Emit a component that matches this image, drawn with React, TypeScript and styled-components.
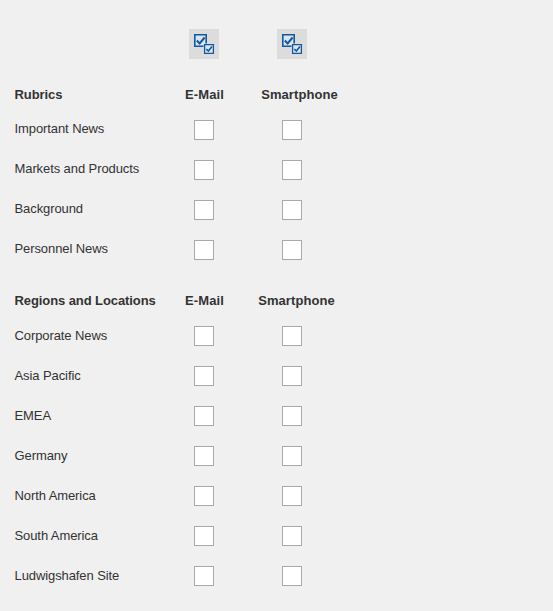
import React from "react";
import styled, { createGlobalStyle } from "styled-components";

const GlobalStyle = createGlobalStyle`
  * { box-sizing: border-box; }
  body { margin: 0; background: #f0f0f0; }
`;

const Page = styled.main`
  min-height: 611px;
  padding: 29px 0 0 14px;
  background: #f0f0f0;
  color: #333;
  font: 13px/20px "Liberation Sans", Arial, sans-serif;
`;

const Row = styled.div`
  display: grid;
  grid-template-columns: 146px 88px 88px;
  height: 40px;
`;

const ActionRow = styled(Row)`
  height: 56px;
`;

const HeadingRow = styled(Row)`
  height: 34px;
  font-weight: bold;
`;

const Section = styled.section`
  margin-bottom: 12px;
`;

const Label = styled.span<{ $drop?: number }>`
  padding: ${({ $drop = 0 }) => $drop}px 0 0 0.5px;
  letter-spacing: -0.09px;
  white-space: nowrap;
`;

const Cell = styled.div<{ $shift?: number }>`
  display: flex;
  justify-content: center;
  align-items: flex-start;
  margin-left: ${({ $shift = 0 }) => $shift}px;
`;

const ColumnHeading = styled(Cell)`
  letter-spacing: 0.08px;
`;

const SelectAll = styled.button`
  width: 30px;
  height: 30px;
  padding: 0;
  border: 0;
  background: #dcdcdc;
`;

const Checkbox = styled.input`
  appearance: none;
  width: 20px;
  height: 20px;
  margin: 1px 0 0;
  border: 1px solid #aaa;
  background: #fff;
`;

const SelectAllIcon = () => (
  <svg width="30" height="30" viewBox="0 0 30 30" fill="none" stroke="#1359a0" display="block">
    <path d="M5.8 5.8h11.4v11.4H5.8z" fill="#dce5ed" strokeWidth="1.6" />
    <path d="m7.8 11.5 2.8 3 5-6" strokeWidth="2" />
    <path d="M14.5 14.5h11v11h-11z" fill="#dcdcdc" stroke="none" />
    <path d="M15.6 15.6h8.8v8.8h-8.8z" fill="#dce5ed" strokeWidth="1.3" />
    <path d="m17.3 20 2 2 3.7-4.5" strokeWidth="1.6" />
  </svg>
);

const sections = [
  { title: "Rubrics", shift: 15, drop: 0, rows: ["Important News", "Markets and Products", "Background", "Personnel News"] },
  {
    title: "Regions and Locations",
    shift: 9,
    drop: 1,
    rows: ["Corporate News", "Asia Pacific", "EMEA", "Germany", "North America", "South America", "Ludwigshafen Site"],
  },
];

export default function App() {
  return (
    <Page>
      <GlobalStyle />
      <ActionRow>
        <span />
        <Cell><SelectAll aria-label="Select all E-Mail"><SelectAllIcon /></SelectAll></Cell>
        <Cell><SelectAll aria-label="Select all Smartphone"><SelectAllIcon /></SelectAll></Cell>
      </ActionRow>
      {sections.map(({ title, shift, drop, rows }) => (
        <Section key={title}>
          <HeadingRow>
            <Label>{title}</Label>
            <ColumnHeading $shift={1}>E-Mail</ColumnHeading>
            <ColumnHeading $shift={shift}>Smartphone</ColumnHeading>
          </HeadingRow>
          {rows.map((label) => (
            <Row key={label}>
              <Label $drop={drop}>{label}</Label>
              <Cell><Checkbox type="checkbox" aria-label={label + " E-Mail"} /></Cell>
              <Cell><Checkbox type="checkbox" aria-label={label + " Smartphone"} /></Cell>
            </Row>
          ))}
        </Section>
      ))}
    </Page>
  );
}
